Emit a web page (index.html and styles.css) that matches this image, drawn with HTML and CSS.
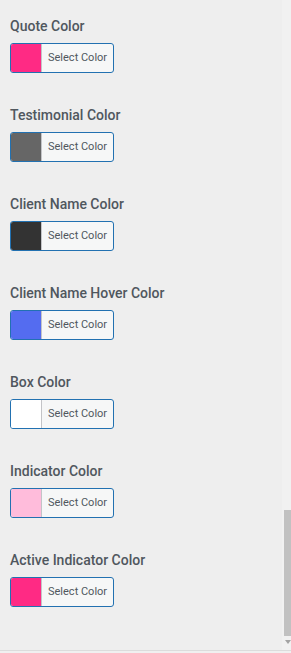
FILE: index.html
```html
<!DOCTYPE html>
<html lang="en">
<head>
    <meta charset="UTF-8">
    <meta name="viewport" content="width=device-width, initial-scale=1.0">
    <title>Testimonial Colors</title>
    <link rel="stylesheet" href="styles.css">
</head>
<body>
    <div class="page">
        <div class="fields">
            <div class="field">
                <label class="field-label">Quote Color</label>
                <button class="color-btn"><span class="swatch swatch-pink"></span><span class="btn-text">Select Color</span></button>
            </div>
            <div class="field">
                <label class="field-label">Testimonial Color</label>
                <button class="color-btn"><span class="swatch swatch-grey"></span><span class="btn-text">Select Color</span></button>
            </div>
            <div class="field">
                <label class="field-label">Client Name Color</label>
                <button class="color-btn"><span class="swatch swatch-dark"></span><span class="btn-text">Select Color</span></button>
            </div>
            <div class="field">
                <label class="field-label">Client Name Hover Color</label>
                <button class="color-btn"><span class="swatch swatch-blue"></span><span class="btn-text">Select Color</span></button>
            </div>
            <div class="field">
                <label class="field-label">Box Color</label>
                <button class="color-btn"><span class="swatch swatch-white"></span><span class="btn-text">Select Color</span></button>
            </div>
            <div class="field">
                <label class="field-label">Indicator Color</label>
                <button class="color-btn"><span class="swatch swatch-light-pink"></span><span class="btn-text">Select Color</span></button>
            </div>
            <div class="field">
                <label class="field-label">Active Indicator Color</label>
                <button class="color-btn"><span class="swatch swatch-pink"></span><span class="btn-text">Select Color</span></button>
            </div>
        </div>

        <div class="scrollbar">
            <div class="scroll-track"></div>
            <div class="scroll-thumb"></div>
            <div class="scroll-arrow"></div>
        </div>
    </div>
    <div class="bottom-edge"></div>
</body>
</html>
```

FILE: styles.css
```css
* { margin: 0; padding: 0; box-sizing: border-box; }
body {
    font-family: Roboto, 'Liberation Sans', sans-serif;
    background: #eeeeee;
    color: #50575e;
    overflow: hidden;
}
.page {
    display: flex;
    height: 650px;
}
.fields {
    flex: 1;
    padding: 18px 0 0 10px;
}
.field { margin-bottom: 34px; }
.field-label {
    display: block;
    font-size: 14px;
    line-height: 17px;
    font-weight: 500;
    color: #50575e;
    margin-bottom: 8px;
}
.color-btn {
    display: flex;
    width: 104px;
    height: 30px;
    border: 1px solid #2271b1;
    border-radius: 3px;
    background: #f6f7f7;
    overflow: hidden;
    font-family: inherit;
    cursor: pointer;
}
.swatch {
    width: 31px;
    height: 100%;
    border-right: 1px solid #c3c4c7;
}
.btn-text {
    padding-left: 6px;
    font-size: 11px;
    line-height: 28px;
    color: #50575e;
}
.swatch-pink { background: #ff2a84; }
.swatch-grey { background: #666666; }
.swatch-dark { background: #333333; }
.swatch-blue { background: #546cf0; }
.swatch-white { background: #ffffff; }
.swatch-light-pink { background: #ffbcdb; }

.scrollbar {
    width: 9px;
    display: flex;
    flex-direction: column;
    background: #f1f1f1;
}
.scroll-track { height: 510px; }
.scroll-thumb {
    height: 126px;
    margin-left: 2px;
    background: #c1c1c1;
}
.scroll-arrow {
    margin: 4px 0 0 3px;
    width: 0;
    height: 0;
    border-left: 3px solid transparent;
    border-right: 3px solid transparent;
    border-top: 4px solid #a3a3a3;
}
.bottom-edge {
    height: 3px;
    border-top: 1px solid #dcdcdc;
    background: #f0f0f0;
}
```
